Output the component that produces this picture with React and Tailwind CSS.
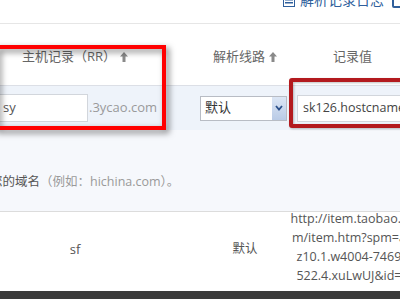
const font = { fontFamily: '"Open Sans", "Noto Sans CJK SC", sans-serif' }

const SortArrow = () => (
  <svg width="8" height="10" viewBox="0 0 8 10" className="ml-1 inline-block">
    <path d="M4 0 L8 4.5 L5.5 4.5 L5.5 10 L2.5 10 L2.5 4.5 L0 4.5 Z" fill="#8a8a8a" />
  </svg>
)

const urlLines = [
  "http://item.taobao.co",
  "m/item.htm?spm=a1",
  "z10.1.w4004-74695",
  "522.4.xuLwUJ&id=4",
]

export default function App() {
  return (
    <div className="relative w-[400px] h-[300px] overflow-hidden bg-white text-[12.5px]" style={font}>
      {/* top toolbar */}
      <div className="h-[24px] border-b border-[#e6e6e6] flex items-start">
        <div className="ml-[283px] -mt-[9px] flex items-center gap-[5px] text-[#2f5f9c] text-[14px] leading-[18px]">
          <svg width="12" height="14" viewBox="0 0 12 14">
            <rect x="0.5" y="0.5" width="11" height="13" fill="none" stroke="#2f5f9c" />
            <rect x="2" y="3" width="8" height="1.5" fill="#2f5f9c" />
            <rect x="2" y="6" width="8" height="1.5" fill="#2f5f9c" />
            <rect x="2" y="9" width="8" height="1.5" fill="#2f5f9c" />
          </svg>
          <span>解析记录日志</span>
        </div>
        <div className="ml-auto mr-[-4px] -mt-[4px] w-[12px] h-[12px] border-2 border-[#2f5f9c] rounded-[2px]" />
      </div>

      {/* table header */}
      <div className="h-[62px] grid grid-cols-[150px_50px_90px_125px] items-center text-[#666] text-[13px] border-b border-[#dcdfe6]">
        <div className="text-center mt-[4px]">主机记录（RR）<SortArrow /></div>
        <div />
        <div className="text-center mt-[4px]">解析线路<SortArrow /></div>
        <div className="text-center mt-[4px]">记录值</div>
      </div>

      {/* edit row */}
      <div className="h-[44px] bg-[#eef3fa] grid grid-cols-[150px_50px_90px_125px] items-center">
        <div className="flex items-center whitespace-nowrap">
          <div className="shrink-0 ml-[-10px] w-[98px] h-[28px] bg-white border border-[#d2d6dc] flex items-center pl-[12px] text-[13px] text-[#555]">sy</div>
          <span className="shrink-0 text-[13px] text-[#9a9a9a] ml-[1px]">.3ycao.com</span>
        </div>
        <div />
        <div className="flex">
          <div className="w-[87px] h-[25px] bg-white border border-[#b8bcc4] flex items-center">
            <span className="pl-[4px] flex-1 text-[#333] text-[13px]">默认</span>
            <div className="w-[14px] h-full bg-gradient-to-b from-[#dce6f5] to-[#b9cbe6] flex items-center justify-center">
              <svg width="8" height="6" viewBox="0 0 8 6">
                <path d="M1 1 L4 4.5 L7 1" fill="none" stroke="#2a4f8a" strokeWidth="1.8" />
              </svg>
            </div>
          </div>
        </div>
        <div className="flex">
          <div className="ml-[7px] w-[130px] h-[27px] bg-white border border-[#d2d6dc] flex items-center pl-[5px] text-[12.5px] text-[#444] whitespace-nowrap overflow-hidden">sk126.hostcname.com</div>
        </div>
      </div>

      {/* hint */}
      <div className="h-[82px] bg-[#f6f8fc] border-b border-[#dcdcdc] flex items-end pb-[19px]">
        <div className="-ml-[10px] whitespace-nowrap text-[12.5px]">
          <span className="text-[#555]">您的域名</span>
          <span className="text-[#9a9a9a]">（例如：hichina.com）。</span>
        </div>
      </div>

      {/* record row */}
      <div className="h-[79px] grid grid-cols-[150px_50px_90px_125px] items-center text-[#555]">
        <div className="text-center text-[13px] -mt-[4px]">sf</div>
        <div />
        <div className="text-center -mt-[4px]">默认</div>
        <div className="text-center text-[12.5px] leading-[19px] whitespace-nowrap -mt-[10px]">
          {urlLines.map(l => <div key={l}>{l}</div>)}
        </div>
      </div>

      {/* bottom bar */}
      <div className="h-[8px] bg-[#3b3b3b]" />

      {/* annotation boxes */}
      <div className="absolute left-[-6px] top-[45px] w-[172px] h-[85px] border-[4px] border-[#ff0000] [filter:drop-shadow(3px_3px_3px_rgba(0,0,0,0.5))]" />
      <div className="absolute left-[289px] top-[78px] w-[130px] h-[50px] border-[4px] border-[#b31a1e] rounded-[3px] [filter:drop-shadow(1px_1px_1px_rgba(0,0,0,0.25))]" />
    </div>
  )
}
